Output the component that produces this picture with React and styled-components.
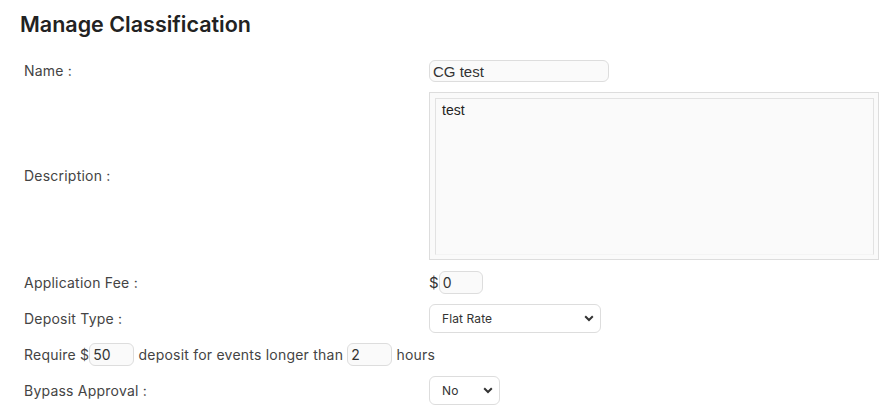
import React from 'react'
import styled, { createGlobalStyle } from 'styled-components'

const GlobalStyle = createGlobalStyle`
  body {
    margin: 0;
    background: #ffffff;
    font-family: Inter, "Noto Sans", sans-serif;
    color: #444444;
  }
`

const Page = styled.div`
  padding: 10px 0 0 0;
`

const Title = styled.h1`
  margin: 0 0 22px 20px;
  font-size: 21.5px;
  line-height: 28px;
  font-weight: 600;
  color: #222222;
`

const Form = styled.div`
  display: flex;
  flex-flow: column nowrap;
  gap: 10px;
  padding-left: 24px;
  letter-spacing: 0.22px;
`

const Row = styled.div`
  display: grid;
  grid-template-columns: 405px 1fr;
  align-items: center;
  min-height: ${({ height }) => height}px;
  margin-top: ${({ extra }) => extra || 0}px;
  font-size: 14px;
  line-height: 18px;
`

const InlineRow = styled.div`
  display: flex;
  align-items: center;
  white-space: pre;
  font-size: 14px;
  height: 23px;
`

const Label = styled.div`
  color: #444444;
`

const Field = styled.div`
  display: flex;
  align-items: center;
`

const TextInput = styled.input`
  box-sizing: border-box;
  width: ${({ width }) => width}px;
  height: ${({ h }) => h || 23}px;
  border: 1px solid #dddddd;
  border-radius: 6px;
  background: #fafafa;
  padding: 0 3px;
  font-family: ${({ arial }) =>
    arial ? '"Liberation Sans", Arial, sans-serif' : 'Inter, sans-serif'};
  font-size: ${({ arial }) => (arial ? 15 : 14)}px;
  letter-spacing: 0;
  color: #333333;
  outline: none;
`

const AreaBox = styled.div`
  box-sizing: border-box;
  width: 450px;
  height: 168px;
  border: 1px solid #dddddd;
  padding: 5px 4px 4px 5px;
  background: #fafafa;
`

const TextArea = styled.textarea`
  box-sizing: border-box;
  display: block;
  width: 100%;
  height: 100%;
  resize: none;
  border: 1px solid #e2e2e2;
  border-bottom-color: #f4f4f4;
  background: #fafafa;
  padding: 3px 6px;
  font-family: "Liberation Sans", Arial, sans-serif;
  font-size: 14px;
  color: #222222;
  outline: none;
`

const SelectWrap = styled.div`
  position: relative;
  width: ${({ width }) => width}px;
`

const Select = styled.select`
  appearance: none;
  box-sizing: border-box;
  width: 100%;
  height: 29px;
  border: 1px solid #dddddd;
  border-radius: 6px;
  background: #ffffff;
  padding: 0 0 0 12px;
  font-family: Inter, sans-serif;
  font-size: 12px;
  letter-spacing: 0.1px;
  color: #333333;
  outline: none;
`

const Chevron = styled.svg`
  position: absolute;
  right: 7px;
  top: 11px;
  pointer-events: none;
`

const Dollar = styled.span`
  color: #333333;
  font-size: 15px;
`

const Dropdown = ({ width, value, options }) => (
  <SelectWrap width={width}>
    <Select defaultValue={value}>
      {options.map((o) => (
        <option key={o}>{o}</option>
      ))}
    </Select>
    <Chevron width='10' height='7' viewBox='0 0 10 7'>
      <path d='M1.2 1.3 L5 5 L8.8 1.3' fill='none' stroke='#333' strokeWidth='2' />
    </Chevron>
  </SelectWrap>
)

const App = () => (
  <Page>
    <GlobalStyle />
    <Title>Manage Classification</Title>
    <Form>
      <Row height={22}>
        <Label>Name :</Label>
        <Field>
          <TextInput width={180} h={22} arial defaultValue='CG test' />
        </Field>
      </Row>
      <Row height={168}>
        <Label>Description :</Label>
        <Field>
          <AreaBox>
            <TextArea defaultValue='test' />
          </AreaBox>
        </Field>
      </Row>
      <Row height={23} extra={1}>
        <Label>Application Fee :</Label>
        <Field>
          <Dollar>$</Dollar>
          <TextInput width={44} defaultValue='0' />
        </Field>
      </Row>
      <Row height={29}>
        <Label>Deposit Type :</Label>
        <Field>
          <Dropdown width={172} value='Flat Rate' options={['Flat Rate', 'Percentage']} />
        </Field>
      </Row>
      <InlineRow>
        Require $<TextInput width={45} defaultValue='50' /> deposit for events longer than{' '}
        <TextInput width={45} defaultValue='2' /> hours
      </InlineRow>
      <Row height={29}>
        <Label>Bypass Approval :</Label>
        <Field>
          <Dropdown width={71} value='No' options={['No', 'Yes']} />
        </Field>
      </Row>
    </Form>
  </Page>
)

export default App
